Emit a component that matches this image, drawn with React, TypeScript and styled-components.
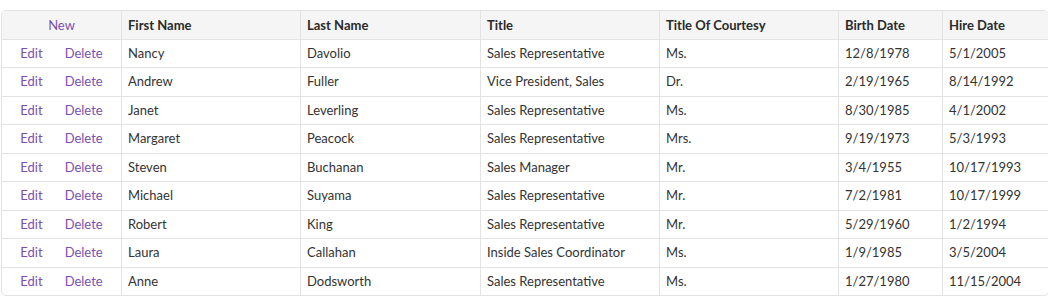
import styled, { createGlobalStyle } from 'styled-components'

// ── Styled components ──────────────────────────────────────────────────────────

const GlobalStyle = createGlobalStyle`
  body {
    margin: 0;
    background: #fff;
    font-family: Lato, "Open Sans", sans-serif;
    font-size: 13px;
    color: #333;
  }
`

const Page = styled.div`padding: 10px 1px 0;`

const Table = styled.table`
  width: 100%;
  border-collapse: separate;
  border-spacing: 0;
  table-layout: fixed;
  border: 1px solid #e3e3e3;
  border-radius: 5px;
  overflow: hidden;
`

const Th = styled.th<{ $center?: boolean }>`
  background: #f5f5f5;
  text-align: ${p => (p.$center ? 'center' : 'left')};
  font-weight: 700;
  color: #2a2a2a;
  padding: 4px 6px 3px;
  height: 21px;
  line-height: 21px;
  border-bottom: 1px solid #e3e3e3;
  border-right: 1px solid #e3e3e3;
  &:last-child { border-right: none; }
`

const Td = styled.td<{ $center?: boolean }>`
  text-align: ${p => (p.$center ? 'center' : 'left')};
  padding: 4px 6px;
  line-height: 19.44px;
  border-bottom: 1px solid #e3e3e3;
  border-right: 1px solid #e3e3e3;
  white-space: nowrap;
  &:last-child { border-right: none; }
  tr:last-child > & { border-bottom: none; }
`

const ActionLink = styled.a`
  color: #7b4fb0;
  font-weight: 400;
  text-decoration: none;
  cursor: pointer;
  & + & { margin-left: 22px; }
`

// ── Data ───────────────────────────────────────────────────────────────────────

interface Employee {
  first: string
  last: string
  title: string
  courtesy: string
  birth: string
  hire: string
}

const employees: Employee[] = [
  { first: 'Nancy', last: 'Davolio', title: 'Sales Representative', courtesy: 'Ms.', birth: '12/8/1978', hire: '5/1/2005' },
  { first: 'Andrew', last: 'Fuller', title: 'Vice President, Sales', courtesy: 'Dr.', birth: '2/19/1965', hire: '8/14/1992' },
  { first: 'Janet', last: 'Leverling', title: 'Sales Representative', courtesy: 'Ms.', birth: '8/30/1985', hire: '4/1/2002' },
  { first: 'Margaret', last: 'Peacock', title: 'Sales Representative', courtesy: 'Mrs.', birth: '9/19/1973', hire: '5/3/1993' },
  { first: 'Steven', last: 'Buchanan', title: 'Sales Manager', courtesy: 'Mr.', birth: '3/4/1955', hire: '10/17/1993' },
  { first: 'Michael', last: 'Suyama', title: 'Sales Representative', courtesy: 'Mr.', birth: '7/2/1981', hire: '10/17/1999' },
  { first: 'Robert', last: 'King', title: 'Sales Representative', courtesy: 'Mr.', birth: '5/29/1960', hire: '1/2/1994' },
  { first: 'Laura', last: 'Callahan', title: 'Inside Sales Coordinator', courtesy: 'Ms.', birth: '1/9/1985', hire: '3/5/2004' },
  { first: 'Anne', last: 'Dodsworth', title: 'Sales Representative', courtesy: 'Ms.', birth: '1/27/1980', hire: '11/15/2004' },
]

const columns: { label: string; width: number }[] = [
  { label: 'First Name', width: 179 },
  { label: 'Last Name', width: 180 },
  { label: 'Title', width: 179 },
  { label: 'Title Of Courtesy', width: 179 },
  { label: 'Birth Date', width: 104 },
  { label: 'Hire Date', width: 105 },
]

// ── Component ──────────────────────────────────────────────────────────────────

export default function App() {
  return (
    <Page>
      <GlobalStyle />
      <Table>
        <colgroup>
          <col style={{ width: 120 }} />
          {columns.map(c => <col key={c.label} style={{ width: c.width }} />)}
        </colgroup>
        <thead>
          <tr>
            <Th $center><ActionLink>New</ActionLink></Th>
            {columns.map(c => <Th key={c.label}>{c.label}</Th>)}
          </tr>
        </thead>
        <tbody>
          {employees.map(e => (
            <tr key={e.first}>
              <Td $center>
                <ActionLink>Edit</ActionLink>
                <ActionLink>Delete</ActionLink>
              </Td>
              <Td>{e.first}</Td>
              <Td>{e.last}</Td>
              <Td>{e.title}</Td>
              <Td>{e.courtesy}</Td>
              <Td>{e.birth}</Td>
              <Td>{e.hire}</Td>
            </tr>
          ))}
        </tbody>
      </Table>
    </Page>
  )
}
